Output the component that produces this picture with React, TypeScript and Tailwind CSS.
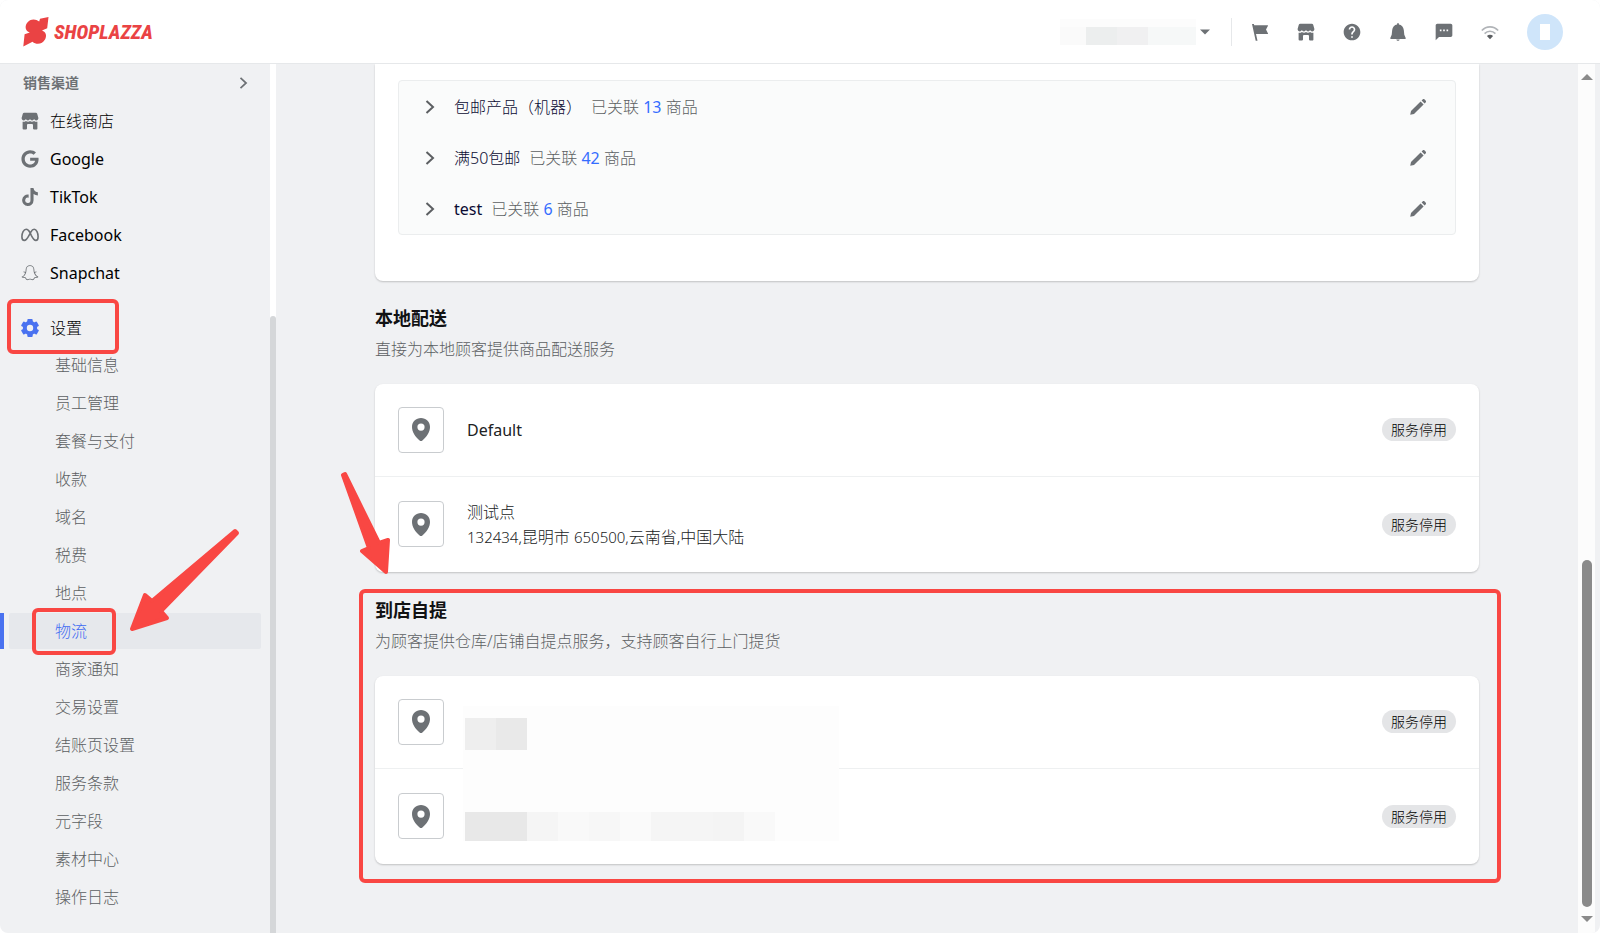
import React from 'react';
import { FaGoogle, FaTiktok } from 'react-icons/fa6';
import { MdHelp, MdSms } from 'react-icons/md';
import { PiSnapchatLogoLight } from 'react-icons/pi';

type IconProps = { className?: string };

const Store = ({ className }: IconProps) => (
  <svg viewBox="0 0 18 18" className={className} fill="currentColor" aria-hidden="true">
    <path d="M3.2.8h11.6c.7 0 1.2.4 1.4 1L17.4 6c0 1.5-1 2.4-2.2 2.4-1 0-1.700-.5-2.100-1.300-.4.8-1.100 1.300-2 1.300-.9 0-1.700-.5-2.100-1.300-.4.8-1.200 1.300-2.100 1.300-.9 0-1.600-.5-2-1.300-.4.8-1.100 1.300-2.100 1.300C1.600 8.400.6 7.500.6 6l1.200-4.200c.2-.6.7-1 1.400-1z" />
    <path d="M1.600 9.700c1.200.3 2.400 0 3.300-.8 1.200 1 2.900 1.100 4.100.1 1.200 1 2.900.9 4.100-.1.9.8 2.100 1.100 3.300.8v6.700c0 .6-.4 1-1 1h-2.600a.8.8 0 0 1-.8-.8v-3.400c0-.7-.5-1.200-1.200-1.200H7.200c-.7 0-1.200.5-1.200 1.200v3.400a.8.8 0 0 1-.8.8H2.600a1 1 0 0 1-1-1z" />
  </svg>
);

const Meta = ({ className }: IconProps) => (
  <svg viewBox="0 0 18 18" className={className} fill="none" stroke="currentColor" strokeWidth="1.6" strokeLinejoin="round" aria-hidden="true">
    <path d="M9 6.6C7.9 4.500 6.8 3.300 5.200 3.300 2.600 3.300.9 7 .9 10.700c0 2.400.9 3.700 2.500 3.700 1.700 0 2.700-1.500 4.500-4.800L9.800 6.200c1-1.800 2-2.900 3.400-2.900 2.300 0 3.900 3.700 3.900 7.400 0 2.400-.8 3.700-2.300 3.700-1.700 0-2.600-1.400-4.400-4.800z" />
  </svg>
);

const Gear = ({ className }: IconProps) => (
  <svg viewBox="0 0 18 18" className={className} fill="currentColor" aria-hidden="true">
    {[0, 60, 120, 180, 240, 300].map(deg => (
      <rect key={deg} x="6.3" y="0" width="5.4" height="5" rx="1" transform={`rotate(${deg} 9 9)`} />
    ))}
    <circle cx="9" cy="9" r="5.2" fill="none" stroke="currentColor" strokeWidth="4" />
  </svg>
);

const Flag = ({ className }: IconProps) => (
  <svg viewBox="0 0 18 18" className={className} fill="currentColor" aria-hidden="true">
    <path d="M1 1h1.900l.3 1.200H16.600c.4 0 .6.300.4.600l-2 3.700 2 4c.2.300 0 .6-.4.600H5l1.500 6.700H4.700z" />
  </svg>
);

const Bell = ({ className }: IconProps) => (
  <svg viewBox="0 0 18 18" className={className} fill="currentColor" aria-hidden="true">
    <path d="M9 0c.5 0 .9.4.9.9v.7c2.600.4 4.600 2.600 4.900 5.400l.5 4.800 1.400 3.300c.2.500 0 .9-.5.900H1.800c-.5 0-.7-.4-.5-.9l1.400-3.300.5-4.800c.3-2.800 2.300-5 4.900-5.400V.9c0-.5.4-.9.9-.9z" />
    <path d="M7.300 16.500h3.400c-.2.800-.9 1.300-1.700 1.300s-1.500-.5-1.700-1.300z" />
  </svg>
);

const Wifi = ({ className }: IconProps) => (
  <svg viewBox="0 0 18 18" className={className} fill="none" strokeWidth="1.6" aria-hidden="true">
    <path d="M.8 7.500C5.400 2.700 12.600 2.700 17.200 7.500" stroke="#b1b4b8" />
    <path d="M3.600 10.600c3-3.100 7.800-3.100 10.800 0" stroke="#b1b4b8" />
    <path d="M5.900 13c1.900-1.600 4.300-1.600 6.200 0L9 16.300z" fill="#5c5f62" />
  </svg>
);

const Pencil = ({ className }: IconProps) => (
  <svg viewBox="0 0 18 18" className={className} fill="currentColor" aria-hidden="true">
    <path d="M1.200 16.800l.8-3.800L11.600 3.400l3 3L5 16z" />
    <path d="M12.600 2.400l1-1c.6-.6 1.400-.6 2 0l1 1c.6.6.6 1.400 0 2l-1 1z" />
  </svg>
);

const Pin = ({ className }: IconProps) => (
  <svg viewBox="0 0 18 23" className={className} fill="currentColor" aria-hidden="true">
    <path fillRule="evenodd" d="M9 0c5 0 9 3.800 9 8.900 0 4.800-3.300 9.900-7.600 13.500-.8.7-2 .7-2.800 0C3.300 18.800 0 13.700 0 8.900 0 3.800 4 0 9 0zm0 5.500a3.600 3.600 0 1 0 0 7.200 3.600 3.600 0 0 0 0-7.200z" />
  </svg>
);

const Chevron = ({ className }: IconProps) => (
  <svg viewBox="0 0 10 14" className={className} fill="none" stroke="currentColor" strokeWidth="2" aria-hidden="true">
    <path d="M1.500 1l6.500 6-6.500 6" />
  </svg>
);

const Caret = ({ className }: IconProps) => (
  <svg viewBox="0 0 12 6" className={className} fill="currentColor" aria-hidden="true">
    <path d="M0 0h12L6 6z" />
  </svg>
);

const Logo = () => (
  <a href="#" className="flex items-center gap-[5px] text-[#ea4344]">
    <svg viewBox="0 0 26 30" className="h-[30px] w-[26px]" fill="currentColor" aria-hidden="true">
      <path d="M25.500 0l-1.300 11.200-5.200 2.300c4.200 1.400 5 5.500 3 9-2.400 4.600-8.500 5.800-12.500 2.300L.3 29.500 1.600 17.300l5.200-1.700C2.300 14 1.600 9.300 4 6 7 1.900 12.500 1.600 16.200 4.600L17 1.800z" />
    </svg>
    <span className="font-['Noto_Sans_ExtraCondensed','Roboto_Condensed','Open_Sans_Condensed','Liberation_Sans',sans-serif] text-xl leading-7 font-extrabold italic">
      SHOPLAZZA
    </span>
  </a>
);

const channels = [
  { name: '在线商店', icon: Store },
  { name: 'Google', icon: FaGoogle },
  { name: 'TikTok', icon: FaTiktok },
  { name: 'Facebook', icon: Meta },
  { name: 'Snapchat', icon: PiSnapchatLogoLight },
];

const settings = [
  '基础信息', '员工管理', '套餐与支付', '收款', '域名', '税费', '地点', '物流',
  '商家通知', '交易设置', '结账页设置', '服务条款', '元字段', '素材中心', '操作日志',
];

const profiles = [
  { name: '包邮产品（机器）', count: 13 },
  { name: '满50包邮', count: 42 },
  { name: 'test', count: 6 },
];

function Header() {
  return (
    <header className="flex h-16 shrink-0 items-center justify-between border-b border-[#e6e8ea] bg-white pr-[37px] pl-[23px]">
      <Logo />
      <div className="flex items-center text-[#6d7175]">
        <button className="flex items-center gap-1" aria-label="store">
          <span className="flex h-[26px] w-[136px] flex-col bg-[#fcfcfc]">
            <span className="h-2" />
            <span className="flex flex-1">
              <span className="w-[26px] bg-[#fafafa]" />
              <span className="w-[31px] bg-[#eceeee]" />
              <span className="w-[31px] bg-[#f0f0f1]" />
              <span className="flex-1 bg-[#f6f8f8]" />
            </span>
          </span>
          <Caret className="h-[6px] w-[10px]" />
        </button>
        <div className="mr-[19px] ml-[21px] h-7 w-px bg-[#e6e8ea]" />
        <div className="flex items-center gap-7">
          <button aria-label="flag"><Flag className="size-[18px]" /></button>
          <button aria-label="shop"><Store className="size-[18px]" /></button>
          <button aria-label="help"><MdHelp className="-m-px size-5" /></button>
          <button aria-label="notifications"><Bell className="size-[18px]" /></button>
          <button aria-label="messages"><MdSms className="-m-px size-5" /></button>
          <button aria-label="network"><Wifi className="size-[18px]" /></button>
          <button aria-label="account" className="flex size-9 items-center justify-center rounded-full bg-[#cfe5fa]">
            <span className="h-4 w-[10px] bg-white" />
          </button>
        </div>
      </div>
    </header>
  );
}

function Sidebar() {
  return (
    <aside className="flex w-[276px] shrink-0">
      <nav className="flex-1">
        <div className="flex h-[38px] items-center justify-between pr-[22px] pl-[23px] text-[#6d7175]">
          <span className="text-sm font-bold">销售渠道</span>
          <Chevron className="h-3 w-[9px]" />
        </div>
        {channels.map(({ name, icon: Icon }) => (
          <a key={name} href="#" className="flex h-[38px] items-center gap-[11px] pl-[21px] text-black">
            <Icon className="size-[18px] text-[#6d7175]" />
            <span className={name === '在线商店' ? 'font-light' : 'font-normal'}>{name}</span>
          </a>
        ))}
        <div className="relative mt-[17px]">
          <a href="#" className="flex h-[38px] items-center gap-[11px] pl-[21px] font-light text-black">
            <Gear className="size-[18px] text-[#4a72f0]" />
            设置
          </a>
          <div className="pointer-events-none absolute -top-[10px] left-[7px] h-[55px] w-28 rounded-md border-4 border-[#f94743]" />
        </div>
        {settings.map(name => (
          <div key={name} className="relative mb-[2px] h-9">
            {name === '物流' ? (
              <>
                <div className="absolute top-0 left-0 h-9 w-1 bg-[#4a72f0]" />
                <a href="#" className="mr-[9px] ml-[9px] flex h-9 items-center rounded-xs bg-[#e6e8ec] pl-[46px] font-light text-[#3f6af2]">
                  {name}
                </a>
                <div className="pointer-events-none absolute -top-[5px] left-8 h-[47px] w-[84px] rounded-md border-4 border-[#f94743]" />
              </>
            ) : (
              <a href="#" className="flex h-9 items-center pl-[55px] font-light text-[#5c5f62]">{name}</a>
            )}
          </div>
        ))}
      </nav>
      <div className="flex w-[6px] flex-col bg-white">
        <div className="flex-[252]" />
        <div className="flex-[617] rounded-t bg-[#d5d7d9]" />
      </div>
    </aside>
  );
}

function SectionTitle({ title, text }: { title: string; text: string }) {
  return (
    <div className="mb-[23px] space-y-[5px]">
      <h2 className="text-lg leading-7 font-bold text-[#111213]">{title}</h2>
      <p className="leading-6 font-light text-[#5c5f62]">{text}</p>
    </div>
  );
}

function PlaceRow({ children, last }: { children?: React.ReactNode; last?: boolean }) {
  return (
    <div className={last ? 'flex h-[95px] items-center px-[23px] pb-px' : 'flex h-[93px] items-center border-b border-[#eef0f1] px-[23px] pb-px'}>
      <div className="flex size-[46px] items-center justify-center rounded border border-[#c9cccf]">
        <Pin className="h-[23px] w-[18px] text-[#6d7175]" />
      </div>
      <div className="ml-[23px] flex-1 pt-[2px] leading-[25px] text-[#202223]">{children}</div>
      <span className="rounded-full bg-[#e4e5e7] px-[9px] text-sm leading-[23px] font-light text-black">服务停用</span>
    </div>
  );
}

function PlaceCard({ children }: { children: React.ReactNode }) {
  return <div className="relative rounded-lg bg-white shadow-[0_1px_2px_rgba(0,0,0,0.2)]">{children}</div>;
}

function Arrows() {
  return (
    <svg className="pointer-events-none absolute top-0 left-0 h-[700px] w-[420px]" viewBox="0 0 420 700" fill="#f94743" stroke="#f94743" strokeWidth="4" strokeLinejoin="round" aria-hidden="true">
      <path d="M235 531L237 533L161 611L167 618L132 629L145 595L152 601Z" />
      <path d="M343 475L345 474L379 543L388 540L386 572L362 551L369 548Z" />
    </svg>
  );
}

export default function App() {
  return (
    <div className="relative flex h-screen flex-col overflow-hidden rounded-lg bg-[#f0f1f3] font-['Noto_Sans','Noto_Sans_CJK_SC',sans-serif] text-base">
      <Header />
      <div className="flex min-h-0 flex-1">
        <Sidebar />
        <main className="min-w-0 flex-1 overflow-hidden">
          <div className="mx-auto max-w-[1104px]">
            <div className="rounded-b-lg bg-white px-[23px] pt-4 pb-[46px] shadow-[0_1px_2px_rgba(0,0,0,0.2)]">
              <div className="rounded border border-[#ebedee] bg-[#fafbfb]">
                {profiles.map(p => (
                  <div key={p.name} className="flex h-[51px] items-center pr-7 pl-[26px]">
                    <button aria-label="expand"><Chevron className="mr-[19px] h-[14px] w-[10px] text-[#5c5f62]" /></button>
                    <span className={p.name === 'test' ? 'text-[#0b0b33]' : 'font-light text-[#0b0b33]'}>{p.name}</span>
                    <span className="ml-[9px] font-light text-[#5c5f62]">
                      已关联 <a href="#" className="font-normal text-[#356dff]">{p.count}</a> 商品
                    </span>
                    <button className="ml-auto" aria-label="edit"><Pencil className="size-[18px] text-[#6d7175]" /></button>
                  </div>
                ))}
              </div>
            </div>

            <section className="pt-[23px]">
              <SectionTitle title="本地配送" text="直接为本地顾客提供商品配送服务" />
              <PlaceCard>
                <PlaceRow>Default</PlaceRow>
                <PlaceRow last>
                  <p className="font-light">测试点</p>
                  <p className="font-light"><span className="text-[15px]">132434,</span>昆明市 <span className="text-[15px]">650500,</span>云南省,中国大陆</p>
                </PlaceRow>
              </PlaceCard>
            </section>

            <section className="relative mt-6">
              <SectionTitle title="到店自提" text="为顾客提供仓库/店铺自提点服务，支持顾客自行上门提货" />
              <PlaceCard>
                <PlaceRow />
                <PlaceRow last />
                <div className="absolute top-[30px] left-[88px] flex h-[135px] w-[376px] flex-col justify-between bg-[#fdfdfd] pt-3 pl-[2px]">
                  <div className="flex h-8">
                    <div className="w-[31px] bg-[#eeeeee]" />
                    <div className="w-[31px] bg-[#e9e9e9]" />
                  </div>
                  <div className="flex h-[29px]">
                    <div className="w-[62px] bg-[#e8e8e8]" />
                    <div className="w-[31px] bg-[#f5f5f5]" />
                    <div className="w-[31px] bg-[#f9f9f9]" />
                    <div className="w-[31px] bg-[#f7f7f7]" />
                    <div className="w-[31px] bg-[#fafafa]" />
                    <div className="w-[62px] bg-[#f5f5f5]" />
                    <div className="w-[31px] bg-[#f4f4f4]" />
                    <div className="w-[31px] bg-[#f9f9f9]" />
                  </div>
                </div>
              </PlaceCard>
              <div className="pointer-events-none absolute -top-[7px] -right-[22px] -bottom-[19px] -left-4 rounded-md border-4 border-[#f94743]" />
            </section>
          </div>
        </main>
        <div className="mr-[5px] flex w-[17px] flex-col items-center bg-[#fcfcfc] pt-[10px] pb-[11px] text-[#8a8a8a]">
          <Caret className="h-[6px] w-3 rotate-180" />
          <div className="flex-[480]" />
          <div className="w-[10px] flex-[347] rounded-full bg-current" />
          <Caret className="mt-[9px] h-[6px] w-3" />
        </div>
      </div>
      <Arrows />
    </div>
  );
}
